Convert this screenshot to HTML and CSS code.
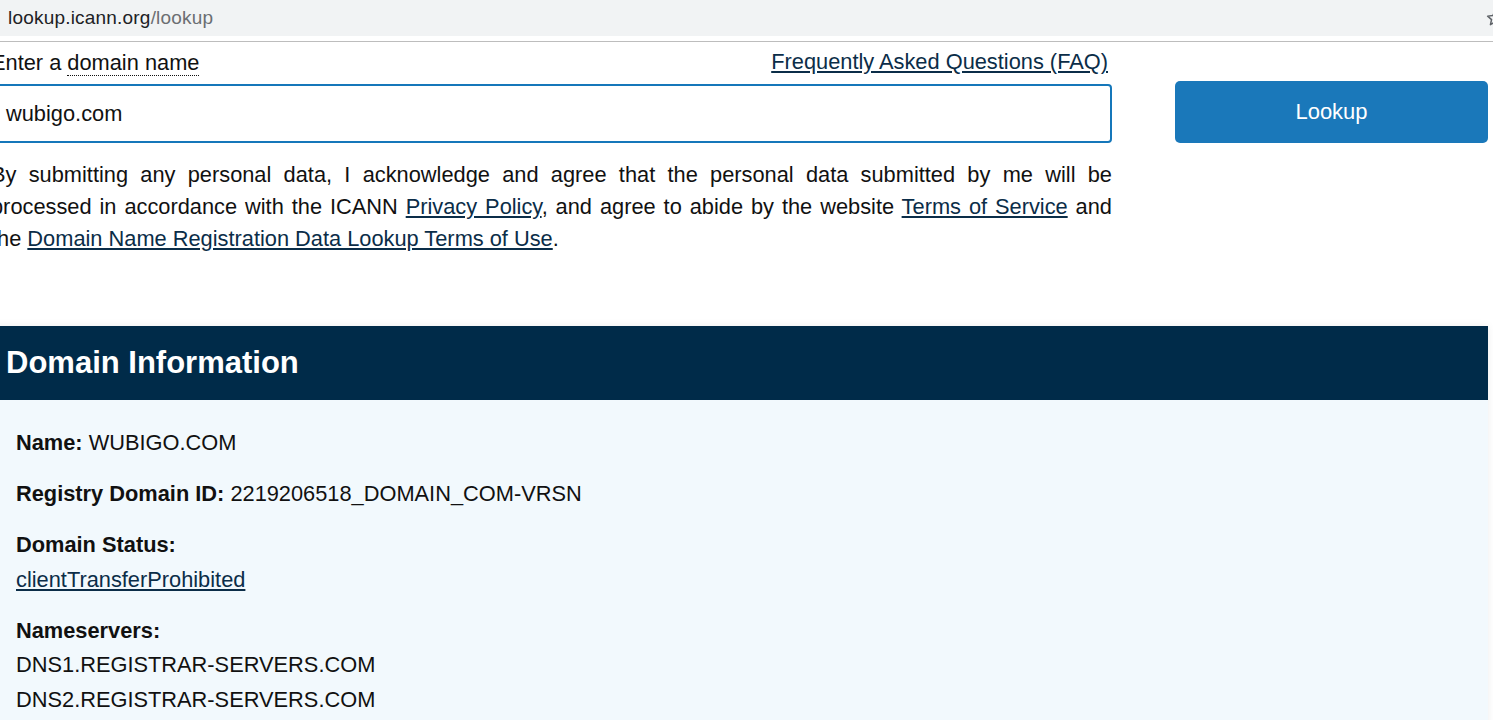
FILE: index.html
```html
<!DOCTYPE html>
<html lang="en">
<head>
<meta charset="utf-8">
<title>ICANN Lookup</title>
<link rel="stylesheet" href="styles.css">
</head>
<body>
<div class="chrome">
  <div class="url"><span class="host">lookup.icann.org</span><span class="path">/lookup</span></div>
  <svg class="star" width="18" height="18" viewBox="0 0 24 24"><path d="M12 2.5l2.9 6.3 6.9.7-5.2 4.6 1.5 6.8L12 17.4l-6.1 3.5 1.5-6.8-5.2-4.6 6.9-.7z" fill="none" stroke="#5f6368" stroke-width="2" stroke-linejoin="round"/></svg>
</div>
<div class="chrome-rule"></div>

<main class="page">
  <div class="lookup">
    <div class="lookup-main">
      <div class="label-row">
        <label class="label">Enter a <span class="dotted">domain name</span></label>
        <a class="link" href="#">Frequently Asked Questions (FAQ)</a>
      </div>
      <div class="input">wubigo.com</div>
      <p class="consent">By submitting any personal data, I acknowledge and agree that the personal data submitted by me will be processed in accordance with the ICANN <a class="link" href="#">Privacy Policy</a>, and agree to abide by the website <a class="link" href="#">Terms of Service</a> and the <a class="link" href="#">Domain Name Registration Data Lookup Terms of Use</a>.</p>
    </div>
    <div class="lookup-side">
      <button class="btn">Lookup</button>
    </div>
  </div>

  <section class="result">
    <h2 class="result-head">Domain Information</h2>
    <div class="result-body">
      <div class="item"><b>Name:</b> WUBIGO.COM</div>
      <div class="item"><b>Registry Domain ID:</b> 2219206518_DOMAIN_COM-VRSN</div>
      <div class="item"><b>Domain Status:</b><br><a class="link" href="#">clientTransferProhibited</a></div>
      <div class="item"><b>Nameservers:</b><br>DNS1.REGISTRAR-SERVERS.COM<br>DNS2.REGISTRAR-SERVERS.COM</div>
    </div>
  </section>
</main>
</body>
</html>
```

FILE: styles.css
```css
html, body {
  margin: 0;
  padding: 0;
  background: #fff;
  overflow: hidden;
}
body {
  font-family: "Liberation Sans", Arial, sans-serif;
  color: #111;
  width: 1493px;
  height: 720px;
}
.chrome {
  height: 36px;
  background: #f1f3f4;
  display: flex;
  align-items: center;
  justify-content: space-between;
  padding-left: 8px;
  overflow: hidden;
}
.url {
  font-size: 19px;
  letter-spacing: 0.2px;
}
.host { color: #202124; }
.path { color: #6b6e72; }
.star {
  margin-right: -11px;
  flex: none;
}
.chrome-rule {
  margin-top: 5px;
  height: 1px;
  background: #bdbdbd;
}
.page {
  margin-left: -9px;
  width: 1497px;
}
.lookup {
  display: flex;
  font-size: 21.8px;
}
.lookup-main {
  width: 1123px;
}
.label-row {
  margin-top: 8px;
  height: 26px;
  display: flex;
  justify-content: space-between;
  align-items: flex-start;
  padding-right: 4px;
  line-height: 26px;
}
.label { color: #111; }
.dotted { border-bottom: 1px dotted #111; }
.link {
  color: #0b2d48;
  text-decoration: underline;
  text-underline-offset: 2px;
}
.label-row .link { margin-top: -1px; }
.input {
  margin-top: 8px;
  height: 59px;
  box-sizing: border-box;
  border: 2px solid #1577ba;
  border-radius: 4px;
  padding-left: 13px;
  display: flex;
  align-items: center;
  color: #111;
}
.consent {
  margin: 16px 0 0;
  line-height: 32px;
  text-align: justify;
  color: #111;
}
.lookup-side {
  margin-left: 63px;
  width: 313px;
}
.btn {
  margin-top: 39px;
  width: 313px;
  height: 62px;
  border: none;
  border-radius: 5px;
  background: #1a78ba;
  color: #fff;
  font-family: "Liberation Sans", Arial, sans-serif;
  font-size: 22px;
}
.result {
  margin-top: 71px;
  box-shadow: 0 0 8px rgba(0, 0, 0, 0.07);
}
.result-head {
  margin: 0;
  height: 74px;
  background: #002b49;
  color: #fff;
  font-size: 31px;
  font-weight: bold;
  padding-left: 15px;
  display: flex;
  align-items: center;
}
.result-body {
  background: #f2f9fd;
  padding: 26px 25px 20px;
  font-size: 21.8px;
  line-height: 34.5px;
  color: #111;
}
.item + .item { margin-top: 16.5px; }
```
